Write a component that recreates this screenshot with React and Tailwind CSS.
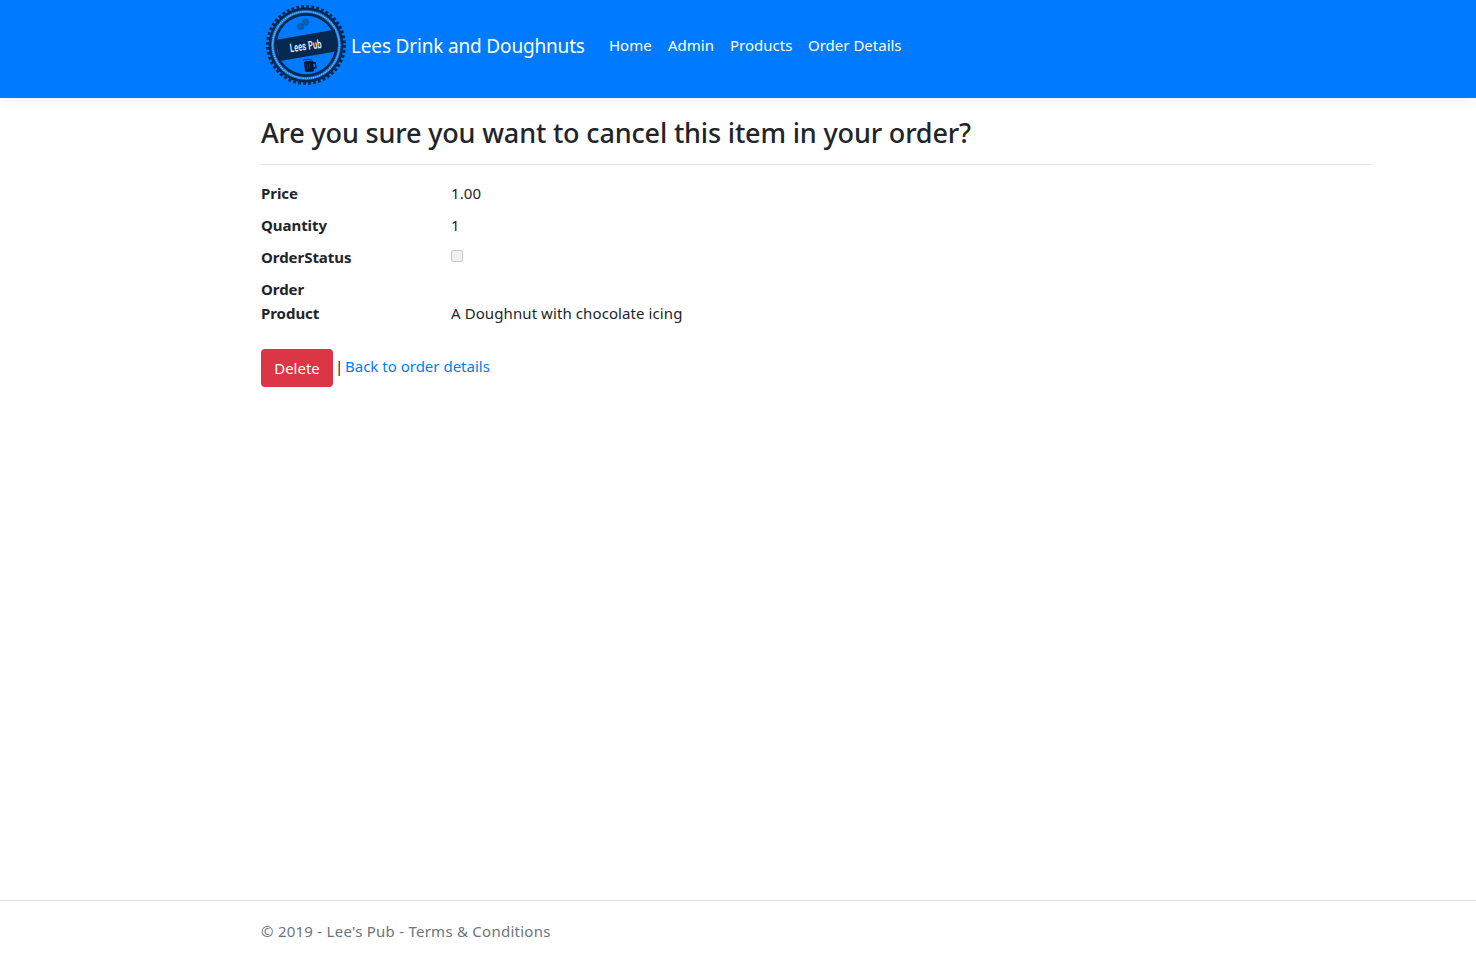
const navLinks = [
  { label: 'Home', cls: 'w-[43px]' },
  { label: 'Admin', cls: 'w-[46px]' },
  { label: 'Products', cls: 'w-[62px]' },
  { label: 'Order Details', cls: 'w-[94px]' },
];

function Logo() {
  return (
    <svg className="block size-[90px] shrink-0" viewBox="0 0 90 90" aria-label="Lees Pub">
      <circle cx="45" cy="45" r="37.500" fill="#04284f" />
      <circle cx="45" cy="45" r="38.5" fill="none" stroke="#04284f" strokeWidth="3" strokeDasharray="2.8 2.24" />
      <circle cx="45" cy="45" r="33.4" fill="none" stroke="#1673d6" strokeWidth="3" />
      <circle cx="45" cy="45" r="33.4" fill="none" stroke="#62b2ff" strokeWidth="1.4" strokeDasharray="1.4 0.7" />
      <circle cx="45" cy="45" r="29.3" fill="#007bff" />
      <g fill="#0a5fb8" stroke="#0856a6" strokeWidth="0.8">
        <circle cx="39.5" cy="26.5" r="3.2" />
        <circle cx="44.5" cy="22.3" r="3.2" />
      </g>
      <path d="M14.500 40 74 29.500 75 51.500 19 61z" fill="#04284f" />
      <g transform="translate(45.2 50) rotate(-8) scale(0.62 1)">
        <text
          textAnchor="middle" fill="#e9f2fa" fontSize="12" fontWeight="600"
          textLength="51" className="font-['Roboto',sans-serif]"
        >
          Lees Pub
        </text>
      </g>
      <g fill="none" stroke="#03152b">
        <path d="M43.5 62 51.5 61 52.5 71 44.5 71.5z" fill="#03152b" strokeWidth="1" />
        <path d="m52 63 2.2-.2.8 4.8-2.8 1" strokeWidth="1.3" />
        <path d="M42 60.5q1.5-2 3-.5 2-2 3.500-.2 1.500-1 2.500.6" strokeWidth="0.9" />
        <path d="m46 64 .5 5m2-5.300.5 5" stroke="#0758ad" strokeWidth="0.7" />
      </g>
    </svg>
  );
}

function Row({ label, children, cls = 'mb-2' }) {
  return (
    <div className={`flex h-6 ${cls}`}>
      <dt className="w-[190px] font-bold tracking-[-0.05px]">{label}</dt>
      <dd className="tracking-[0.09px]">{children}</dd>
    </div>
  );
}

export default function App() {
  return (
    <div className="flex h-[958px] flex-col overflow-hidden bg-white font-['Noto_Sans','Open_Sans',sans-serif] text-[15px] leading-6 text-[#212529]">
      <header className="h-[98px] shrink-0 bg-[#007bff] pl-[261px] text-white shadow-[0_4px_12px_rgba(0,0,0,0.05)]">
        <div className="flex h-[90px] items-center">
          <Logo />
          <a href="#" className="w-[234px] pt-0.5 text-[19px] leading-[30px] tracking-[-0.17px] whitespace-nowrap">Lees Drink and Doughnuts</a>
          <nav className="ml-6 flex gap-4">
            {navLinks.map((l) => (
              <a key={l.label} href="#" className={`whitespace-nowrap ${l.cls}`}>{l.label}</a>
            ))}
          </nav>
        </div>
      </header>
      <main className="ml-[261px] flex w-[1110px] flex-1 flex-col items-start pt-[18px]">
        <h3 className="text-[27px] leading-[34px] font-medium tracking-[-0.16px]">Are you sure you want to cancel this item in your order?</h3>
        <hr className="mt-[14px] mb-4 w-full border-[#e5e5e5]" />
        <dl>
          <Row label="Price">1.00</Row>
          <Row label="Quantity">1</Row>
          <Row label="OrderStatus">
            <span className="mt-[5px] block size-3 rounded-[2px] border border-[#c8c8c8] bg-[#f0f0f0]" />
          </Row>
          <Row label="Order" cls="mb-0" />
          <Row label="Product">A Doughnut with chocolate icing</Row>
        </dl>
        <div className="mt-4 flex items-start">
          <button className="h-[38px] w-[72px] rounded bg-[#dc3545] text-white">Delete</button>
          <span className="mt-[5px] ml-[2px] w-[10px]">|</span>
          <a href="#" className="mt-[5px] whitespace-nowrap text-[#007bff]">Back to order details</a>
        </div>
      </main>
      <footer className="h-[58px] shrink-0 border-t border-[#dee2e6] pt-[18px] pl-[261px] tracking-[0.25px] text-[#6c757d]">
        © 2019 - Lee's Pub - Terms &amp; Conditions
      </footer>
    </div>
  );
}
